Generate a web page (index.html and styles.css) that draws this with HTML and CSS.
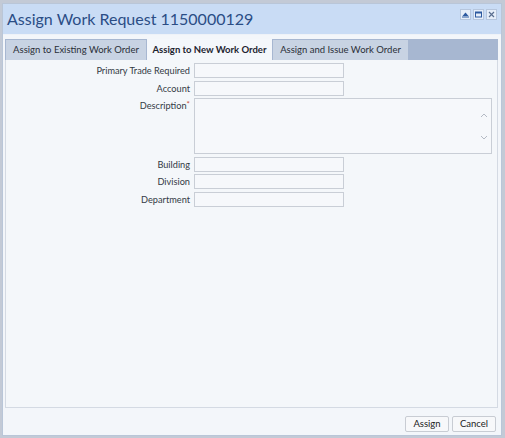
FILE: index.html
```html
<!DOCTYPE html>
<html>
<head>
<meta charset="utf-8">
<link rel="stylesheet" href="styles.css">
</head>
<body>
<div class="dialog">
  <div class="header">
    <div class="title">Assign Work Request 1150000129</div>
    <div class="tools">
      <span class="tool"><svg width="9" height="9" viewBox="0 0 9 9"><path d="M1.5 6 L4.5 2.5 L7.5 6 Z" fill="#2d5aa0"/><rect x="1" y="6.5" width="7" height="1" fill="#2d5aa0"/></svg></span>
      <span class="tool"><svg width="9" height="9" viewBox="0 0 9 9"><rect x="1.5" y="2" width="6" height="5" fill="none" stroke="#2d5aa0" stroke-width="1"/><rect x="1.5" y="2" width="6" height="1.5" fill="#2d5aa0"/></svg></span>
      <span class="tool"><svg width="9" height="9" viewBox="0 0 9 9"><path d="M2 2 L7 7 M7 2 L2 7" stroke="#5a6f90" stroke-width="1.2"/></svg></span>
    </div>
  </div>
  <div class="body">
    <div class="tabs">
      <div class="tab">Assign to Existing Work Order</div>
      <div class="tab active">Assign to New Work Order</div>
      <div class="tab">Assign and Issue Work Order</div>
    </div>
    <div class="panel">
      <div class="form">
        <label class="lbl">Primary Trade Required</label><div class="input"></div>
        <label class="lbl">Account</label><div class="input"></div>
        <label class="lbl">Description<span class="req">*</span></label>
        <div class="textarea">
          <span class="scroll up"><svg width="8" height="6" viewBox="0 0 8 6"><path d="M1 5 L4 2 L7 5" fill="none" stroke="#b4bac4" stroke-width="1"/></svg></span>
          <span class="scroll down"><svg width="8" height="6" viewBox="0 0 8 6"><path d="M1 1 L4 4 L7 1" fill="none" stroke="#b4bac4" stroke-width="1"/></svg></span>
        </div>
        <label class="lbl">Building</label><div class="input"></div>
        <label class="lbl">Division</label><div class="input"></div>
        <label class="lbl">Department</label><div class="input"></div>
      </div>
    </div>
    <div class="footer">
      <button class="btn">Assign</button>
      <button class="btn">Cancel</button>
    </div>
  </div>
</div>
</body>
</html>
```

FILE: styles.css
```css
html, body {
  margin: 0;
  padding: 0;
  background: #c3cad6;
  font-family: "Lato", "Noto Sans", sans-serif;
}
body {
  padding: 3px 3px 2px 2px;
  height: 438px;
  box-sizing: border-box;
}
.dialog {
  height: 433px;
  background: #f3f6fa;
  border: 1px solid #b9c6d8;
  box-sizing: border-box;
  display: flex;
  flex-direction: column;
}
.header {
  height: 30px;
  background: #c9dcf5;
  display: flex;
  align-items: flex-start;
  justify-content: space-between;
  padding: 0 4px 0 4px;
  flex-shrink: 0;
}
.title {
  font-size: 16px;
  color: #2b4d85;
  line-height: 20px;
  margin-top: 5px;
  white-space: nowrap;
}
.tools {
  display: flex;
  gap: 2px;
  margin-top: 5px;
}
.tool {
  width: 9px;
  height: 9px;
  background: #e6eef9;
  border: 1px solid #b6c6dd;
  display: flex;
}
.body {
  flex: 1;
  display: flex;
  flex-direction: column;
  padding: 4px 3px 0 2px;
  border-top: 1px solid #eef2f8;
}
.tabs {
  height: 21px;
  background: #a7b7d1;
  display: flex;
  align-items: flex-end;
  padding-left: 1px;
  gap: 1px;
}
.tab {
  height: 20px;
  line-height: 20px;
  font-size: 9.5px;
  color: #2a2f38;
  background: #c8d3e3;
  text-align: center;
  white-space: nowrap;
  box-sizing: border-box;
}
.tab:nth-child(1) { width: 140px; }
.tab:nth-child(2) { width: 125px; }
.tab:nth-child(3) { width: 135px; }
.tab.active {
  background: #f4f7fb;
  font-weight: bold;
  color: #1d2430;
  height: 21px;
  line-height: 21px;
}
.panel {
  height: 348px;
  background: #f4f7fa;
  border: 1px solid #d4dae3;
  border-top: none;
  box-sizing: border-box;
  padding: 3px 5px 0 0;
}
.form {
  display: grid;
  grid-template-columns: 184px 1fr;
  column-gap: 4px;
  row-gap: 2.5px;
  align-items: start;
}
.lbl {
  font-size: 9.2px;
  color: #333a44;
  text-align: right;
  line-height: 15px;
  height: 15px;
  white-space: nowrap;
}
.req { color: #c8503c; font-size: 8px; position: relative; top: -2px; line-height: 0; }
.input {
  width: 150px;
  height: 15px;
  box-sizing: border-box;
  border: 1px solid #c9ced6;
  background: #f6f8fb;
}
.textarea {
  height: 56px;
  box-sizing: border-box;
  border: 1px solid #c9ced6;
  background: #f6f8fb;
  position: relative;
}
.scroll { position: absolute; right: 3px; display: flex; }
.scroll.up { top: 13px; }
.scroll.down { top: 36px; }
.footer {
  display: flex;
  justify-content: flex-end;
  gap: 3px;
  padding: 8px 2px 0 0;
}
.btn {
  height: 16px;
  padding: 0;
  font-family: inherit;
  font-size: 9.5px;
  color: #222;
  background: #f7f8fa;
  border: 1px solid #c8ccd3;
  border-radius: 2px;
  width: 44px;
  line-height: 14px;
}
```
